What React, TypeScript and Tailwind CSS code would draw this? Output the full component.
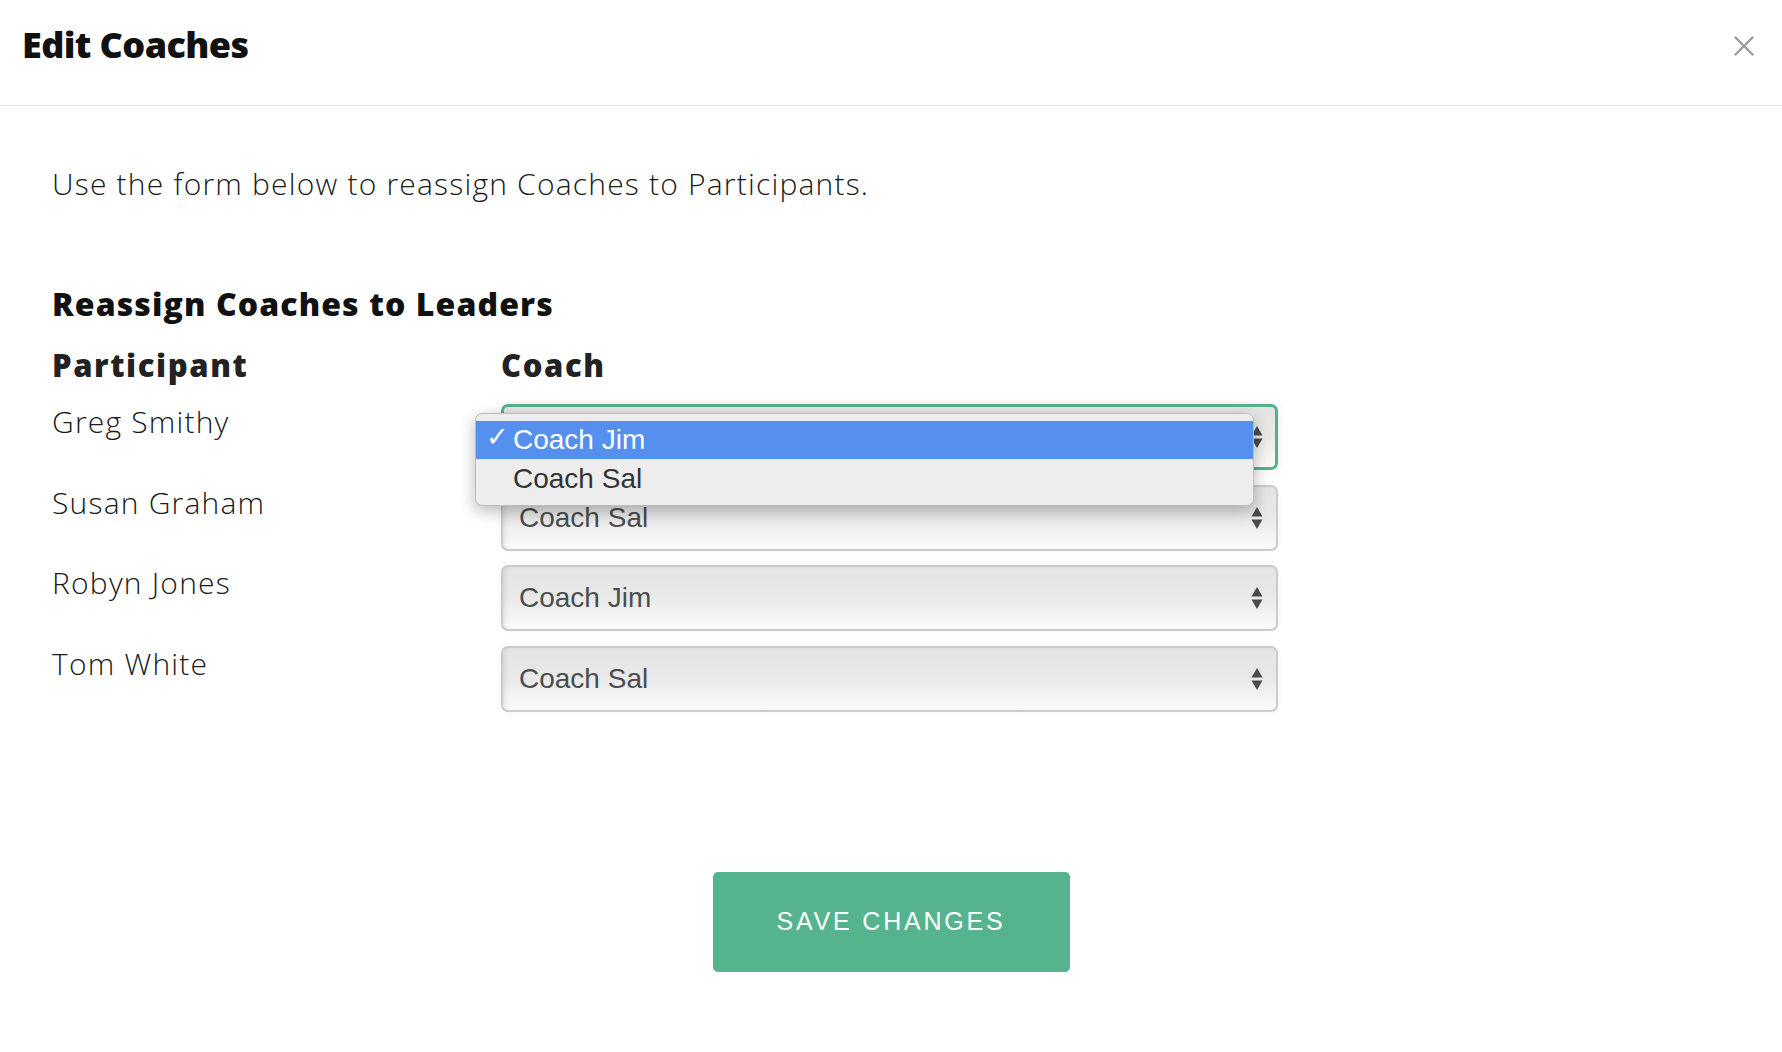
import React from "react";

const rows = [
  { name: "Greg Smithy", coach: "Coach Jim", open: true },
  { name: "Susan Graham", coach: "Coach Sal", open: false },
  { name: "Robyn Jones", coach: "Coach Jim", open: false },
  { name: "Tom White", coach: "Coach Sal", open: false },
];

function Arrows() {
  return (
    <svg width="12" height="24" viewBox="0 0 12 24" className="shrink-0">
      <polygon points="6,1 11.5,10.5 0.5,10.5" fill="#4a4a4a" />
      <polygon points="0.5,13.5 11.5,13.5 6,23" fill="#4a4a4a" />
    </svg>
  );
}

function SelectBox({ value, focused }: { value: string; focused: boolean }) {
  return (
    <div
      className={
        focused
          ? "relative h-[66px] w-[777px] rounded-[7px] border-[3px] border-[#52b38b] bg-gradient-to-b from-[#e4e4e4] via-[#e9e9e9] to-[#fbfbfb] flex items-center justify-between pl-[15px] pr-[12px] shadow-[0_0_10px_rgba(0,0,0,0.08)]"
          : "relative h-[66px] w-[777px] rounded-[7px] border-[2px] border-[#cbcbcb] bg-gradient-to-b from-[#e4e4e4] via-[#e9e9e9] to-[#fbfbfb] flex items-center justify-between pl-[16px] pr-[13px] shadow-[inset_3px_0_3px_rgba(0,0,0,0.06),0_0_6px_rgba(0,0,0,0.05)]"
      }
    >
      <span className="text-[28px] text-[#4d4d4d] [font-family:'Liberation_Sans',Arial,sans-serif]">
        {focused ? "" : value}
      </span>
      <Arrows />
    </div>
  );
}

function Popup() {
  return (
    <div className="absolute left-[-26px] top-[9px] w-[779px] h-[93px] rounded-[7px] border border-[#bdbdbd] bg-[#ededed] shadow-[0_5px_16px_rgba(0,0,0,0.28)] py-[7px] z-10 [font-family:'Liberation_Sans',Arial,sans-serif]">
      <div className="h-[38px] bg-[#5590ef] flex items-center text-white text-[28px]">
        <span className="w-[37px] pl-[10px] text-[27px] font-bold leading-none -mt-[8px] [font-family:'DejaVu_Sans',sans-serif]">
          ✓
        </span>
        <span>Coach Jim</span>
      </div>
      <div className="h-[39px] flex items-center text-[#333] text-[28px] pl-[37px]">
        Coach Sal
      </div>
    </div>
  );
}

export default function App() {
  return (
    <div className="w-[1782px] h-[1052px] bg-white [font-family:'Open_Sans',sans-serif] text-[#222]">
      <div className="h-[106px] border-b border-[#e6e6e6] flex items-center justify-between pl-[22px] pr-[28px]">
        <h1 className="text-[36px] font-extrabold text-[#111] tracking-[-0.6px] -mt-[16px]">Edit Coaches</h1>
        <svg width="20" height="20" viewBox="0 0 20 20" className="-mt-[14px]">
          <path d="M1.5 1.5 L18.5 18.5 M18.5 1.5 L1.5 18.5" stroke="#9a9a9a" strokeWidth="2.4" strokeLinecap="round" />
        </svg>
      </div>

      <div className="pl-[52px]">
        <p className="mt-[58px] text-[30px] leading-[40px] font-light text-[#1a1a1a] tracking-[1.2px]">
          Use the form below to reassign Coaches to Participants.
        </p>

        <h2 className="mt-[80px] text-[32px] leading-[40px] font-extrabold text-[#111] tracking-[1.1px]">
          Reassign Coaches to Leaders
        </h2>

        <div className="mt-[21px] flex text-[31px] leading-[40px] font-extrabold text-[#222] tracking-[1.6px]">
          <div className="w-[449px]">Participant</div>
          <div>Coach</div>
        </div>

        <div className="mt-[19px]">
          {rows.map((r) => (
            <div key={r.name} className="flex h-[80.5px]">
              <div className="w-[449px] text-[30px] leading-[40px] -mt-[2px] font-light text-[#1a1a1a] tracking-[1.2px]">
                {r.name}
              </div>
              <div className="relative">
                <SelectBox value={r.coach} focused={r.open} />
                {r.open && <Popup />}
              </div>
            </div>
          ))}
        </div>
      </div>

      <div className="flex justify-center mt-[146px]">
        <button className="w-[357px] h-[100px] rounded-[5px] bg-[#55b48d] text-white text-[25px] tracking-[2.8px] [font-family:'Liberation_Sans',Arial,sans-serif]">
          SAVE CHANGES
        </button>
      </div>
    </div>
  );
}
